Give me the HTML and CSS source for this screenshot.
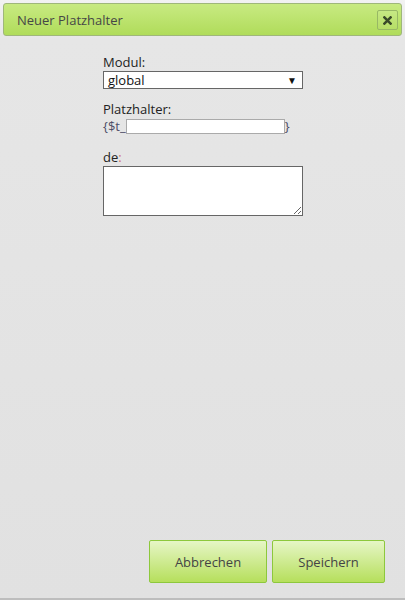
FILE: index.html
```html
<!DOCTYPE html>
<html lang="de">
<head>
<meta charset="utf-8">
<title>Neuer Platzhalter</title>
<link rel="stylesheet" href="styles.css">
</head>
<body>
<div class="dialog">
  <div class="titlebar">
    <span class="title">Neuer Platzhalter</span>
    <button class="close" type="button" aria-label="Schließen">
      <svg width="9" height="9" viewBox="0 0 9 9"><path d="M1.4 1.4 L7.6 7.6 M7.6 1.4 L1.4 7.6" stroke="#3a4a2a" stroke-width="2.5" stroke-linecap="square"/></svg>
    </button>
  </div>
  <div class="content">
    <form class="form">
      <label class="label">Modul:</label>
      <div class="select"><span>global</span><span class="arrow">▼</span></div>
      <label class="label">Platzhalter:</label>
      <div class="ph-row"><span class="brace">{$t_</span><input class="ph-input" type="text"><span class="brace">}</span></div>
      <label class="label">de<span class="colon">:</span></label>
      <textarea class="area"></textarea>
    </form>
    <div class="buttons">
      <button class="btn btn-cancel" type="button">Abbrechen</button>
      <button class="btn btn-save" type="button">Speichern</button>
    </div>
  </div>
</div>
</body>
</html>
```
FILE: styles.css
```css
html, body {
  margin: 0;
  padding: 0;
  width: 405px;
  height: 600px;
  overflow: hidden;
}
body {
  font-family: "Open Sans", "Liberation Sans", sans-serif;
  font-size: 13px;
  color: #222;
  background: #e2e2e2;
}
.dialog {
  height: 598px;
  display: flex;
  flex-direction: column;
  border-bottom: 2px solid #bdbdbd;
  background: linear-gradient(#f2f2f2 0px, #e6e6e6 40px, #e1e1e1 100%);
}
.titlebar {
  margin: 3px 3px 0 3px;
  height: 31px;
  border: 1px solid #9fb77a;
  border-radius: 3px;
  background: linear-gradient(#c8ea82, #b0dc5a);
  display: flex;
  align-items: center;
  padding: 0 3px 0 13px;
}
.title {
  flex: 1;
  color: #464646;
  font-size: 13px;
}
.close {
  width: 21px;
  height: 20px;
  margin-top: 1px;
  padding: 0;
  border: 1px solid #98b865;
  border-radius: 2px;
  background: linear-gradient(#c6e884, #b6de66);
  display: flex;
  align-items: center;
  justify-content: center;
}
.close svg { display: block; }
.content {
  flex: 1;
  display: flex;
  flex-direction: column;
  justify-content: space-between;
}
.form {
  display: flex;
  flex-direction: column;
  padding: 18px 0 0 103px;
  width: 200px;
}
.label {
  display: block;
  font-size: 13px;
  line-height: 17px;
  color: #222;
}
.colon { color: #d07070; }
.select {
  box-sizing: border-box;
  width: 200px;
  height: 18px;
  border: 1px solid #666;
  background: #fff;
  display: flex;
  align-items: center;
  justify-content: space-between;
  padding: 0 5px 0 4px;
  margin-bottom: 12px;
  color: #111;
  font-size: 13px;
  line-height: 16px;
}
.arrow { font-size: 10px; color: #111; }
.ph-row {
  display: flex;
  align-items: center;
  height: 16px;
  line-height: 16px;
  margin-bottom: 15px;
}
.brace { color: #4d4d66; font-size: 13px; }
.ph-input {
  box-sizing: border-box;
  width: 159px;
  height: 15px;
  margin: 0;
  border: 1px solid #aaa;
  background: #fff;
  padding: 0;
}
.area {
  box-sizing: border-box;
  width: 200px;
  height: 50px;
  margin: 0;
  border: 1px solid #666;
  background: #fff;
  padding: 0;
}
.buttons {
  display: flex;
  justify-content: flex-end;
  gap: 5px;
  padding: 0 20px 15px 0;
}
.btn {
  height: 43px;
  border: 1px solid #8dc83c;
  border-radius: 2px;
  background: linear-gradient(#e6f6c6, #b6df5c);
  font-family: "Open Sans", "Liberation Sans", sans-serif;
  font-size: 13px;
  color: #444;
  padding: 0;
}
.btn-cancel { width: 118px; }
.btn-save { width: 113px; }
```
